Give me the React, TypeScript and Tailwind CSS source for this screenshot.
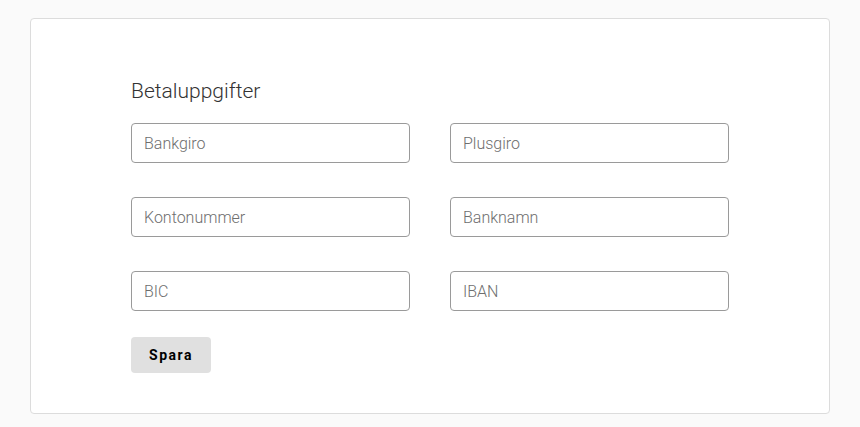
import React from 'react';

const fields = [
  ['Bankgiro', 'Plusgiro'],
  ['Kontonummer', 'Banknamn'],
  ['BIC', 'IBAN'],
];

const inputClass =
  "w-full h-10 rounded border border-[#9a9a9a] bg-white px-3 text-base font-light text-[#333] placeholder:text-[#6e6e6e] outline-none";

export default function App() {
  return (
    <div className="min-h-screen bg-[#fafafa] pt-[18px] px-[30px]" style={{ fontFamily: 'Roboto, "Liberation Sans", sans-serif' }}>
      <div className="w-[800px] h-[396px] rounded border border-[#dcdcdc] bg-white px-[100px] pt-[60px]">
        <h2 className="text-[21px] leading-6 font-light text-[#333] mb-[20px]">Betaluppgifter</h2>
        <div className="flex flex-col gap-[34px]">
          {fields.map((row) => (
            <div key={row[0]} className="grid grid-cols-2 gap-10">
              {row.map((label) => (
                <input key={label} type="text" placeholder={label} className={inputClass} />
              ))}
            </div>
          ))}
        </div>
        <button className="mt-[26px] w-20 h-9 rounded bg-[#e0e0e0] text-sm font-bold tracking-[1.5px] text-black">
          Spara
        </button>
      </div>
    </div>
  );
}
